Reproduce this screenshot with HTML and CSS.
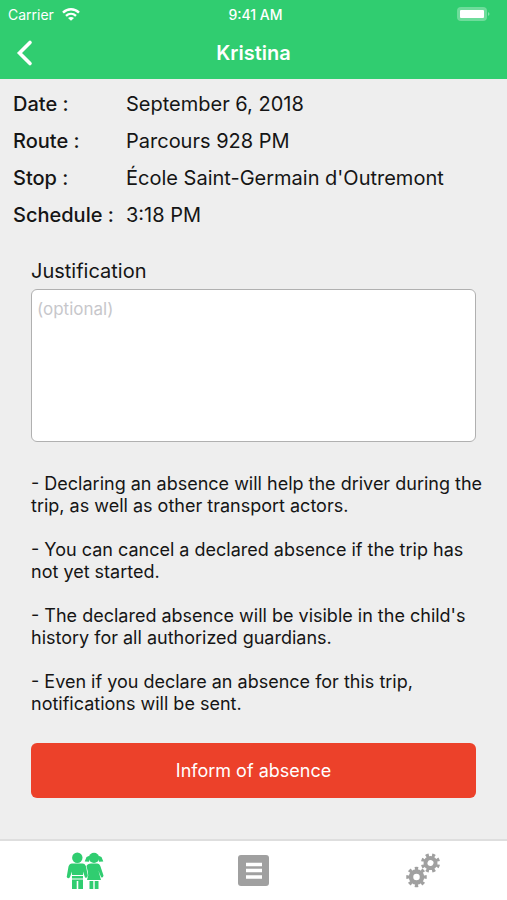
FILE: index.html
```html
<!DOCTYPE html>
<html lang="en">
<head>
<meta charset="utf-8">
<meta name="viewport" content="width=device-width, initial-scale=1">
<title>Kristina</title>
<link rel="stylesheet" href="styles.css">
</head>
<body>
<header class="top">
  <div class="status">
    <div class="carrier"><span>Carrier</span>
      <svg width="18" height="13" viewBox="0 0 18 13" fill="none" stroke="currentColor" stroke-width="2.4"><path d="M1 4.6C5.6 .2 12.400 .2 17 4.600M4 7.800C6.900 5.200 11.100 5.200 14 7.800"/><path d="M9 12.800 6 10Q9 7.800 12 10Z" fill="currentColor" stroke="none"/></svg>
    </div>
    <span class="time">9:41 AM</span>
    <svg class="battery" width="34" height="14" viewBox="0 0 34 14" fill="currentColor"><rect width="30" height="14" rx="4" opacity=".3"/><rect x="3" y="3" width="24" height="8" rx="1"/><path d="M31 5q3 2 0 4z" opacity=".4"/></svg>
  </div>
  <div class="nav">
    <button class="back" type="button" aria-label="Back"><svg width="18" height="28" viewBox="0 0 18 28" fill="none" stroke="currentColor" stroke-width="3.6" stroke-linecap="round" stroke-linejoin="miter"><path d="M14 3.500 3.500 14 14 24.500"/></svg></button>
    <h1>Kristina</h1>
  </div>
</header>
<main>
  <dl class="details">
    <dt>Date :</dt><dd>September 6, 2018</dd>
    <dt>Route :</dt><dd>Parcours 928 PM</dd>
    <dt>Stop :</dt><dd>École Saint-Germain d'Outremont</dd>
    <dt>Schedule :</dt><dd>3:18 PM</dd>
  </dl>
  <form class="absence">
    <label for="why">Justification</label>
    <textarea id="why" placeholder="(optional)"></textarea>
    <div class="notes">
      <p>- Declaring an absence will help the driver during the<br>trip, as well as other transport actors.</p>
      <p>- You can cancel a declared absence if the trip has<br>not yet started.</p>
      <p>- The declared absence will be visible in the child's<br>history for all authorized guardians.</p>
      <p>- Even if you declare an absence for this trip,<br>notifications will be sent.</p>
    </div>
    <button class="submit" type="button">Inform of absence</button>
  </form>
</main>
<nav class="tabs">
  <a class="active" href="#children" aria-label="Children">
    <svg width="38" height="38" viewBox="0 0 38 38" fill="currentColor"><circle cx="11.300" cy="5.700" r="5.200"/><path d="M6 11.500H16.500Q19 11.500 20 14.500L21.800 23.500Q21.500 26.500 19 25.500L17 19.500V23H6V19.500L4 25Q2.500 27.500 .7 25L2.500 14.500Q3.500 11.500 6 11.500ZM6 24H17V26.500H6ZM6 27.500H17V37H12.300V29H10.700V37H6Z"/><circle cx="28" cy="5.900" r="5.100"/><path d="M24 3.500 20.500 5 18.700 9.500 23 9.700ZM32 3.500 35.500 5 37.300 9.500 33 9.700ZM25 11.500H31Q33.500 11.500 34.500 14.500L37.500 23.500Q37 26.500 35 25L32.400 18.500 35 28H21L23.600 18.500 22.300 24Q21.700 18 20.500 14Q21.500 11.500 25 11.500ZM23.500 29H27.300V37H23.500ZM28.700 29H32.500V37H28.700Z"/></svg>
  </a>
  <a href="#history" aria-label="History">
    <svg width="32" height="32" viewBox="0 0 32 32"><rect width="31" height="31" rx="3" fill="currentColor"/><path d="M8 9.500H24M8 15.500H24M8 22H24" stroke="#fff" stroke-width="3.500"/></svg>
  </a>
  <a href="#settings" aria-label="Settings">
    <svg width="36" height="36" viewBox="0 0 36 36" fill="none" stroke="currentColor"><g><circle cx="11.500" cy="24" r="5.500" stroke-width="4.500"/><circle cx="11.500" cy="24" r="8.500" stroke-width="3.500" pathLength="16" stroke-dasharray="1 1" stroke-dashoffset=".5"/></g><g transform="rotate(22 25.500 10)"><circle cx="25.500" cy="10" r="5" stroke-width="4"/><circle cx="25.500" cy="10" r="7.800" stroke-width="3.600" pathLength="16" stroke-dasharray="1 1" stroke-dashoffset=".5"/></g></svg>
  </a>
</nav>
</body>
</html>
```

FILE: styles.css
```css
* { box-sizing: border-box; }
body {
  margin: 0;
  min-height: 100vh;
  display: flex;
  flex-direction: column;
  background: #eeeeee;
  color: #151515;
  font-family: Inter, "Liberation Sans", sans-serif;
}
button { border: 0; font: inherit; color: #fff; cursor: pointer; }
svg { display: block; }
.top { background: #30cd70; color: #fff; padding-bottom: 1px; }
.status {
  display: grid;
  grid-template-columns: 1fr auto 1fr;
  align-items: center;
  height: 28px;
  padding: 0 16px 0 8px;
  font-size: 14px;
}
.carrier { display: flex; align-items: center; gap: 8px; }
.time { font-weight: 500; padding-left: 12px; }
.battery { justify-self: end; }
.nav {
  display: grid;
  grid-template-columns: 48px 1fr 48px;
  align-items: center;
  height: 50px;
}
.back { background: none; padding: 0 0 0 16px; }
h1 { margin: 0; font-size: 20px; font-weight: 600; text-align: center; }
main { flex: 1; }
.details {
  display: grid;
  grid-template-columns: 105px 1fr;
  column-gap: 8px;
  margin: 0;
  padding: 7px 13px 0;
  font-size: 20px;
  line-height: 37px;
}
dt { font-weight: 500; white-space: nowrap; }
dd { margin: 0; }
.absence { display: flex; flex-direction: column; padding: 21px 31px 0; }
.absence label { font-size: 20px; line-height: 32px; }
textarea {
  height: 153px;
  margin-top: 2px;
  padding: 7px 5px;
  border: 1px solid #b0b0b0;
  border-radius: 6px;
  background: #fff;
  font: 17px/24px Inter, "Liberation Sans", sans-serif;
  resize: none;
}
textarea::placeholder { color: #c7c7cb; }
.notes { margin-top: 31px; font-size: 18px; line-height: 22px; white-space: nowrap; }
.notes p { margin: 0 0 22px; }
.submit {
  height: 55px;
  margin-top: 6px;
  border-radius: 6px;
  background: #ec412a;
  font-size: 18px;
}
.tabs {
  display: grid;
  grid-template-columns: repeat(3, 1fr);
  height: 61px;
  border-top: 2px solid #dedede;
  background: #fff;
}
.tabs a { display: flex; align-items: center; justify-content: center; color: #a0a0a0; }
.tabs a.active { color: #30cd70; }
```
